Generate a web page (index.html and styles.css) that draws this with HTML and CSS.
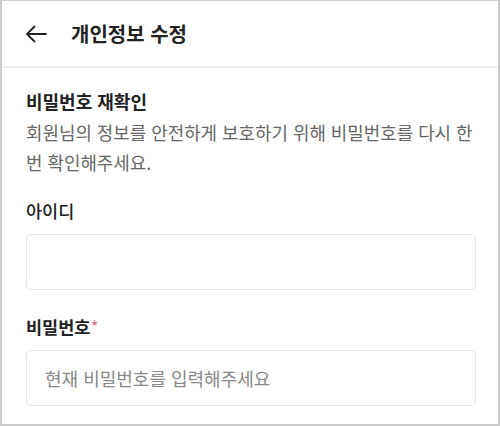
FILE: index.html
```html
<!DOCTYPE html>
<html lang="ko">
<head>
<meta charset="utf-8">
<link rel="stylesheet" href="styles.css">
</head>
<body>
<div class="frame">
  <header class="header">
    <svg class="back" width="22" height="18" viewBox="0 0 22 18" fill="none" stroke="#222" stroke-width="1.8" stroke-linecap="round" stroke-linejoin="round">
      <path d="M21 9H2M9.5 1.5L2 9l7.5 7.5"/>
    </svg>
    <h1 class="title">개인정보 수정</h1>
  </header>
  <main class="content">
    <h2 class="section-title">비밀번호 재확인</h2>
    <p class="desc">회원님의 정보를 안전하게 보호하기 위해 비밀번호를 다시 한 번 확인해주세요.</p>
    <label class="label">아이디</label>
    <div class="input"></div>
    <label class="label bold">비밀번호<span class="req">*</span></label>
    <div class="input"><span class="placeholder">현재 비밀번호를 입력해주세요</span></div>
  </main>
</div>
</body>
</html>
```
FILE: styles.css
```css
* { box-sizing: border-box; margin: 0; padding: 0; }
html, body { width: 500px; height: 426px; background: #fff; }
body { font-family: "Noto Sans CJK KR", "Noto Sans", sans-serif; color: #222; overflow: hidden; }
.frame {
  width: 500px; height: 426px;
  border: 2px solid #cdcdcd; border-top-width: 1px;
  display: flex; flex-direction: column;
}
.header {
  height: 67px; display: flex; align-items: center;
  padding-left: 23px; border-bottom: 2px solid #ececec;
}
.back { display: block; margin-right: 24px; margin-top: 1px; }
.title { font-size: 20px; font-weight: 700; color: #222; }
.content { padding: 20px 22px 0 24px; display: flex; flex-direction: column; }
.section-title { font-size: 18px; font-weight: 700; line-height: 26px; color: #222; }
.desc { font-size: 17.9px; line-height: 30px; color: #666; margin-top: 3px; }
.label { font-size: 17.5px; line-height: 26px; height: 26px; margin-top: 21px; color: #222; font-weight: 500; }
.label.bold { font-weight: 700; margin-top: 25px; }
.req { color: #d9708a; font-weight: 400; line-height: 26px; }
.input {
  height: 56px; margin-top: 10px; border: 1px solid #e6e6e6; border-radius: 5px;
  display: flex; align-items: center; padding-left: 18px;
}
.input + .label { margin-top: 24px; }
.placeholder { font-size: 18px; color: #888; }
```
